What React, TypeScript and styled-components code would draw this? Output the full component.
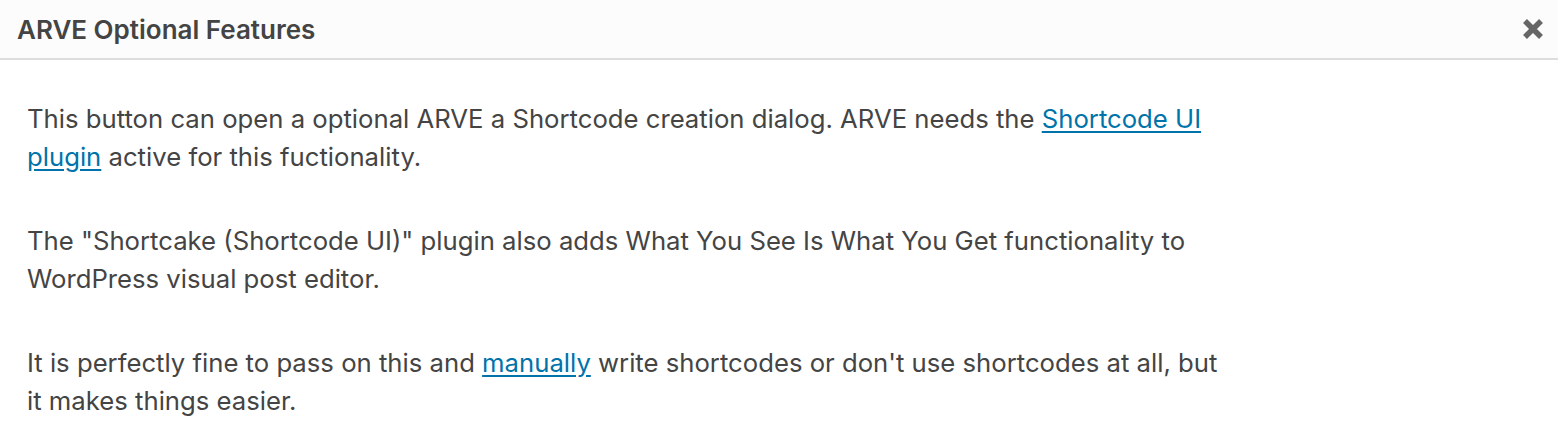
import React from "react";
import styled, { createGlobalStyle } from "styled-components";

const Global = createGlobalStyle`
  html, body { margin: 0; padding: 0; background: #fff; }
  body { font-family: Inter, "Noto Sans", sans-serif; color: #444; }
`;

const Dialog = styled.div`
  width: 1558px;
  height: 442px;
  background: #fff;
  display: flex;
  flex-direction: column;
  overflow: hidden;
`;

const Header = styled.div`
  flex-shrink: 0;
  height: 58px;
  background: #fcfcfc;
  border-bottom: 2px solid #ddd;
  display: flex;
  align-items: center;
  justify-content: space-between;
  padding: 0 12px 0 17px;
`;

const Title = styled.h1`
  margin: 0;
  font-size: 26px;
  font-weight: 600;
  color: #444;
`;

const Close = styled.button`
  border: 0;
  background: transparent;
  padding: 0;
  width: 26px;
  height: 26px;
  display: flex;
  align-items: center;
  justify-content: center;
  cursor: pointer;
`;

const Body = styled.div`
  flex-shrink: 0;
  padding: 40px 27px 0;
  width: 1205px;
`;

const Para = styled.p`
  margin: 0 0 46px;
  font-size: 25.7px;
  line-height: 38px;
  color: #444;
`;

const Link = styled.a`
  color: #0073aa;
  text-decoration: underline;
  text-underline-offset: 3px;
`;

export default function App() {
  return (
    <>
      <Global />
      <Dialog>
        <Header>
          <Title>ARVE Optional Features</Title>
          <Close aria-label="Close">
            <svg width="24" height="24" viewBox="0 0 24 24">
              <path d="M4 4 L20 20 M20 4 L4 20" stroke="#666" strokeWidth="5.5" strokeLinecap="butt" />
            </svg>
          </Close>
        </Header>
        <Body>
          <Para>
            This button can open a optional ARVE a Shortcode creation dialog. ARVE needs the{" "}
            <Link href="#">Shortcode UI plugin</Link> active for this fuctionality.
          </Para>
          <Para>
            The "Shortcake (Shortcode UI)" plugin also adds What You See Is What You Get functionality to
            WordPress visual post editor.
          </Para>
          <Para>
            It is perfectly fine to pass on this and <Link href="#">manually</Link> write shortcodes or
            don't use shortcodes at all, but it makes things easier.
          </Para>
        </Body>
      </Dialog>
    </>
  );
}
